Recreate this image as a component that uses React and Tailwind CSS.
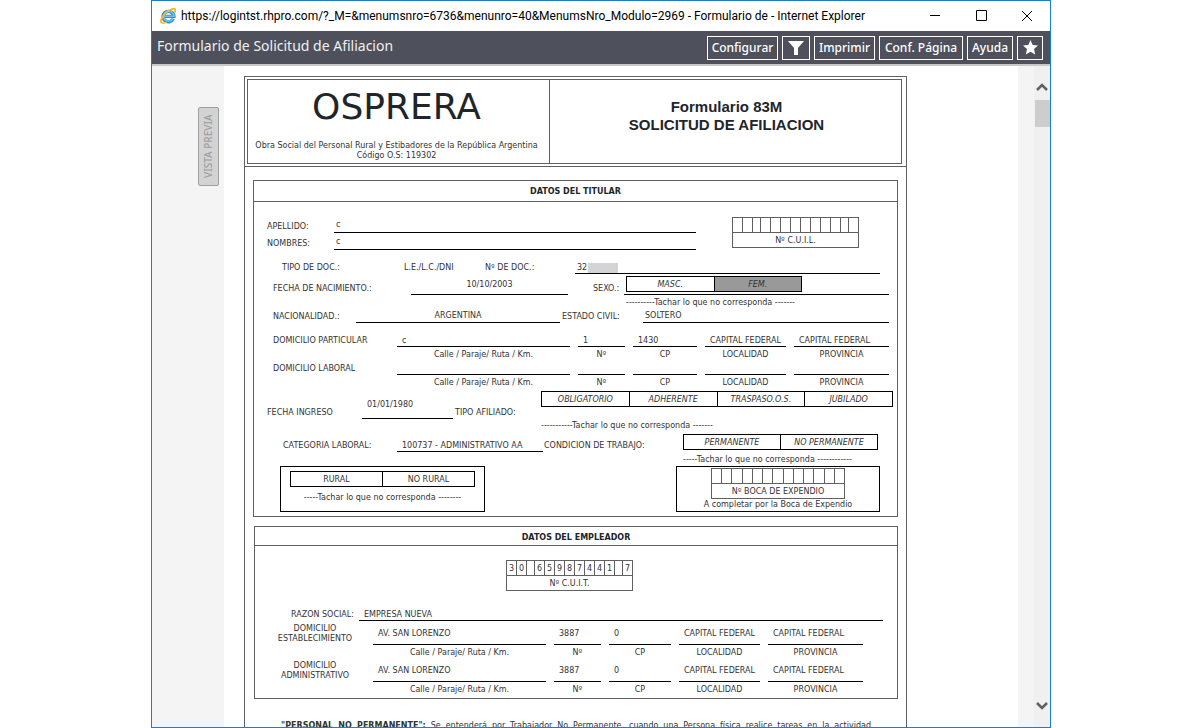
const CUIT = ['3', '0', '', '6', '5', '9', '8', '7', '4', '4', '1', '', '7']
const EMPTY = Array(13).fill('')

export default function App() {
    return (
        <div className="flex h-screen justify-center overflow-hidden bg-white pl-[2px] font-['DejaVu_Sans',Verdana,sans-serif] text-[#212529]">
            <div className="flex w-full max-w-[900px] flex-col border border-[#1a7fd4]">
                <TitleBar />
                <Toolbar />
                <main className="flex min-h-0 flex-1">
                    <aside className="w-[72px] shrink-0 bg-[#f4f4f4]">
                        <button className="mt-[41px] ml-[46px] flex h-[79px] w-[21px] rotate-180 items-center justify-center rounded-xs border border-[#a0a0a0] bg-[#d3d3d3] font-['Noto_Sans',sans-serif] text-[10px] font-medium text-[#a0a0a0] [writing-mode:vertical-rl]">VISTA PREVIA</button>
                    </aside>
                    <div className="min-w-0 flex-1 overflow-hidden bg-white pt-[10px] pl-5">
                        <Form />
                    </div>
                    <div className="w-4 shrink-0 bg-[#f4f4f4]"></div>
                    <ScrollBar />
                </main>
            </div>
        </div>
    )
}

function TitleBar() {
    return (
        <header className="flex h-[30px] shrink-0 items-center bg-white pl-2 font-['Roboto',sans-serif] text-xs text-black">
            <IeLogo />
            <h1 className="ml-[5px] flex-1 overflow-hidden whitespace-nowrap">https://logintst.rhpro.com/?_M=&amp;menumsnro=6736&amp;menunro=40&amp;MenumsNro_Modulo=2969 - Formulario de - Internet Explorer</h1>
            <WindowButton label="Minimizar"><path d="M0 4.5h10" /></WindowButton>
            <WindowButton label="Maximizar"><path d="M.5 -.5h10v10h-10z" /></WindowButton>
            <WindowButton label="Cerrar"><path d="M0 0l10 10M10 0L0 10" /></WindowButton>
        </header>
    )
}

function WindowButton({ label, children }) {
    return (
        <button aria-label={label} className="flex h-full w-[46px] shrink-0 items-center justify-center">
            <svg width="10" height="10" viewBox="0 0 10 10" fill="none" stroke="#000" className="overflow-visible">{children}</svg>
        </button>
    )
}

function IeLogo() {
    return (
        <svg width="16" height="16" viewBox="0 0 16 16" fill="none" className="shrink-0">
            <path d="M13.4 10.8A5.4 5.2 0 1 1 13.9 8.4H4.500" stroke="#2b8fd6" strokeWidth="3.4" />
            <path d="M13 11A5.200 5 0 1 1 13.900 8.200H4.500" stroke="#6cc4f2" strokeWidth="1.6" />
            <path d="M2.600 15.200C-.8 14.600 1.200 8.600 7 4 11.500.4 15.600-.4 15.300 2.400c-.1 1-.4 1.600-.8 2.200" stroke="#f2b826" strokeWidth="1.8" />
            <path d="M2.600 15.200c1.200.2 2.600-.3 4-1.200" stroke="#f2b826" strokeWidth="1.4" />
        </svg>
    )
}

function Toolbar() {
    return (
        <nav className="flex h-[35px] shrink-0 items-center gap-1 border-b-2 border-[#c8c8c8] bg-[#4e515c] pr-[7px] pl-[5px] font-['Noto_Sans',sans-serif] text-white">
            <h2 className="flex-1 pb-1 text-[14px] whitespace-nowrap text-[#f0f0f0]">Formulario de Solicitud de Afiliacion</h2>
            <ToolButton className="w-[71px]">Configurar</ToolButton>
            <ToolButton className="w-[28px]" label="Filtrar">
                <svg width="16" height="14" viewBox="0 0 16 14" fill="#fff"><path d="M0 0h16L10 7v7H6V7z" /></svg>
            </ToolButton>
            <ToolButton className="w-[61px]">Imprimir</ToolButton>
            <ToolButton className="w-[84px]">Conf. Página</ToolButton>
            <ToolButton className="w-[46px]">Ayuda</ToolButton>
            <ToolButton className="w-[26px]" label="Favoritos">
                <svg width="15" height="15" viewBox="0 0 15 15" fill="#fff"><path d="M7.5 0l2.2 4.9 5.3.6-4 3.6 1.2 5.4-4.7-2.8-4.7 2.8L4 9.1 0 5.5l5.3-.6z" /></svg>
            </ToolButton>
        </nav>
    )
}

function ToolButton({ className, label, children }) {
    return (
        <button aria-label={label} className={`flex h-6 shrink-0 items-center justify-center border border-white text-[12px] font-medium whitespace-nowrap ${className}`}>{children}</button>
    )
}

function ScrollBar() {
    return (
        <div className="flex w-4 shrink-0 flex-col items-center bg-[#f0f0f0]">
            <svg width="12" height="10" viewBox="0 0 12 10" fill="none" stroke="#606060" strokeWidth="2.5" className="mt-4"><path d="M1 8l5-5 5 5" /></svg>
            <div className="mt-2 h-[27px] w-[15px] bg-[#cdcdcd]"></div>
            <svg width="12" height="10" viewBox="0 0 12 10" fill="none" stroke="#606060" strokeWidth="2.5" className="mt-auto mb-4"><path d="M1 2l5 5 5-5" /></svg>
        </div>
    )
}

function Form() {
    return (
        <article className="w-full max-w-[663px] border border-[#606060] text-[8px] leading-3">
            <div className="border-b border-[#606060] py-[2px] pr-1 pl-[2px]">
                <div className="flex h-[85px] border border-[#606060] text-center">
                    <div className="w-[302px] border-r border-[#606060] pr-1">
                        <div className="mt-1 text-[36px] leading-[46px]">OSPRERA</div>
                        <p className="mt-[11px] leading-[10px] text-[#333]">Obra Social del Personal Rural y Estibadores de la República Argentina<br />Código O.S: 119302</p>
                    </div>
                    <div className="flex-1 pt-[18px] pl-[2px] font-['Liberation_Sans',Arial,sans-serif] text-[15px] leading-[18px] font-bold">Formulario 83M<br />SOLICITUD DE AFILIACION</div>
                </div>
            </div>
            <Titular />
            <Empleador />
            <p className="mt-5 mr-[35px] ml-9 text-justify leading-[14px] text-[#333] [text-align-last:justify]"><b>"PERSONAL NO PERMANENTE":</b> Se entenderá por Trabajador No Permanente, cuando una Persona física realice tareas en la actividad</p>
        </article>
    )
}

function Titular() {
    return (
        <section className="mx-2 mt-[13px] border border-[#606060] pb-1 text-[#333]">
            <h3 className="h-[21px] border-b border-[#606060] text-center leading-[22px] font-bold text-[#212529]">DATOS DEL TITULAR</h3>
            <div className="flex items-start">
                <div>
                    <Row className="h-[31px] pl-[13px]">
                        <Label className="w-[67px]">APELLIDO:</Label>
                        <Value className="w-[362px] pb-[2px] pl-[2px]">c</Value>
                    </Row>
                    <Row className="h-[17px] pl-[13px]">
                        <Label className="w-[67px]">NOMBRES:</Label>
                        <Value className="w-[362px] pb-[2px] pl-[2px]">c</Value>
                    </Row>
                </div>
                <Digits className="mt-[15px] ml-9 w-[127px]" digits={EMPTY} split caption="Nº C.U.I.L." />
            </div>
            <Row className="h-6 pl-7">
                <Label className="w-[122px]">TIPO DE DOC.:</Label>
                <Label className="w-[81px]">L.E./L.C./DNI</Label>
                <Label className="w-[90px]">Nº DE DOC.:</Label>
                <Value className="flex w-[305px] items-center pl-[2px]">32<span className="ml-px h-[10px] w-[30px] bg-[#d3d4d5]"></span></Value>
            </Row>
            <Row className="h-[21px] pl-[19px]">
                <Label className="w-[138px]">FECHA DE NACIMIENTO.:</Label>
                <Value className="w-[157px] pb-1 text-center">10/10/2003</Value>
                <Label className="ml-[25px] w-[31px]">SEXO.:</Label>
                <div className="w-[265px] border-b border-black pb-[2px] pl-[2px]">
                    <Options className="w-[176px] italic" items={['MASC.', 'FEM.']} selected="FEM." />
                </div>
            </Row>
            <div className="h-[13px] pl-[372px] leading-[15px]">----------Tachar lo que no corresponda -------</div>
            <Row className="h-[15px] pl-[19px]">
                <Label className="w-[83px]">NACIONALIDAD.:</Label>
                <Value className="w-[204px] pb-px text-center">ARGENTINA</Value>
                <Label className="ml-[2px] w-[81px]">ESTADO CIVIL:</Label>
                <Value className="w-[246px] pb-px pl-[2px]">SOLTERO</Value>
            </Row>
            <Address label="DOMICILIO PARTICULAR" values={['c', '1', '1430', 'CAPITAL FEDERAL', 'CAPITAL FEDERAL']} rowClass="h-6" />
            <Address label="DOMICILIO LABORAL" values={['', '', '', '', '']} rowClass="h-[14px]" />
            <Row className="h-[30px] pl-[13px]">
                <Label className="w-[95px]">FECHA INGRESO</Label>
                <Value className="w-[91px] pb-2 pl-[5px]">01/01/1980</Value>
                <Label className="ml-[2px] w-[86px]">TIPO AFILIADO:</Label>
                <Options className="mb-3 w-[352px] italic" items={['OBLIGATORIO', 'ADHERENTE', 'TRASPASO.O.S.', 'JUBILADO']} />
            </Row>
            <div className="h-[13px] pl-[287px] leading-[14px]">-----------Tachar lo que no corresponda -------</div>
            <Row className="h-5 pl-[29px]">
                <Label className="w-[114px]">CATEGORIA LABORAL:</Label>
                <Value className="w-[146px] pl-[5px]">100737 - ADMINISTRATIVO AA</Value>
                <Label className="ml-px w-[139px]">CONDICION DE TRABAJO:</Label>
                <Options className="mb-[2px] w-[195px] italic" items={['PERMANENTE', 'NO PERMANENTE']} />
            </Row>
            <div className="h-[14px] pl-[429px] leading-4">-----Tachar lo que no corresponda ------------</div>
            <div className="flex justify-between pr-[17px] pl-[26px]">
                <div className="h-[46px] w-[205px] border border-black px-[9px] pt-1 text-center">
                    <Options items={['RURAL', 'NO RURAL']} />
                    <div className="leading-[22px]">-----Tachar lo que no corresponda --------</div>
                </div>
                <div className="h-[46px] w-[204px] border border-black pt-px text-center leading-3">
                    <Digits className="ml-[34px] w-[134px]" digits={EMPTY} caption="Nº BOCA DE EXPENDIO" />
                    A completar por la Boca de Expendio
                </div>
            </div>
        </section>
    )
}

function Empleador() {
    const values = ['AV. SAN LORENZO', '3887', '0', 'CAPITAL FEDERAL', 'CAPITAL FEDERAL']
    return (
        <section className="mt-[9px] mr-2 ml-[9px] border border-[#606060] pb-[2px] text-[#333]">
            <h3 className="h-[19px] border-b border-[#606060] text-center leading-[22px] font-bold text-[#212529]">DATOS DEL EMPLEADOR</h3>
            <Digits className="mt-[14px] ml-[251px] w-[127px]" digits={CUIT} split caption="Nº C.U.I.T." />
            <Row className="h-[30px] pl-9">
                <Label className="w-[68px]">RAZON SOCIAL:</Label>
                <Value className="w-[524px] pl-[5px]">EMPRESA NUEVA</Value>
            </Row>
            <Address employer label={<>DOMICILIO<br />ESTABLECIMIENTO</>} values={values} rowClass="h-6" />
            <Address employer label={<>DOMICILIO<br />ADMINISTRATIVO</>} values={values} rowClass="h-[23px]" />
        </section>
    )
}

function Row({ className, children }) {
    return <div className={`flex items-end whitespace-nowrap ${className}`}>{children}</div>
}

function Label({ className, children }) {
    return <span className={`shrink-0 pb-px leading-[10px] ${className}`}>{children}</span>
}

function Value({ className, children }) {
    return <span className={`block border-b border-black leading-[10px] ${className}`}>{children}</span>
}

function Address({ label, values, rowClass, employer }) {
    const captions = ['Calle / Paraje/ Ruta / Km.', 'Nº', 'CP', 'LOCALIDAD', 'PROVINCIA']
    const cols = employer
        ? 'grid grid-cols-[110px_173px_47px_62px_81px_95px] gap-x-2'
        : 'grid grid-cols-[135px_173px_47px_64px_81px_95px] gap-x-2'
    return (
        <div className="whitespace-nowrap">
            <div className={`items-end ${cols} ${rowClass}`}>
                <span className={employer ? 'pr-2 pb-px pl-[18px] text-center leading-[10px]' : 'pb-px pl-[19px] leading-[10px]'}>{label}</span>
                {values.map((v, i) => <Value key={i} className={employer ? 'pb-[5px] pl-[5px]' : 'pl-[5px]'}>{v}</Value>)}
            </div>
            <div className={`h-[14px] text-center leading-4 ${cols}`}>
                <span></span>
                {captions.map((c) => <span key={c}>{c}</span>)}
            </div>
        </div>
    )
}

function Options({ items, selected, className = '' }) {
    return (
        <div className={`flex h-4 divide-x divide-black border border-black text-center leading-4 ${className}`}>
            {items.map((item) => <span key={item} className={item === selected ? 'h-[14px] flex-1 bg-[#999]' : 'h-[14px] flex-1'}>{item}</span>)}
        </div>
    )
}

// `split` narrows the two separator cells (prefix - number - check digit)
function Digits({ digits, caption, split, className }) {
    return (
        <div className={`border border-[#606060] text-center ${className}`}>
            <div className="flex h-[15px] border-b border-[#606060] leading-4">
                {digits.map((d, i) => (
                    <span key={i} className={`h-[14px] border-[#606060] ${i < 12 ? 'border-r' : ''} ${split && (i === 2 || i === 11) ? 'w-2' : 'flex-1'}`}>{d}</span>
                ))}
            </div>
            <div className="h-[14px] leading-4">{caption}</div>
        </div>
    )
}
